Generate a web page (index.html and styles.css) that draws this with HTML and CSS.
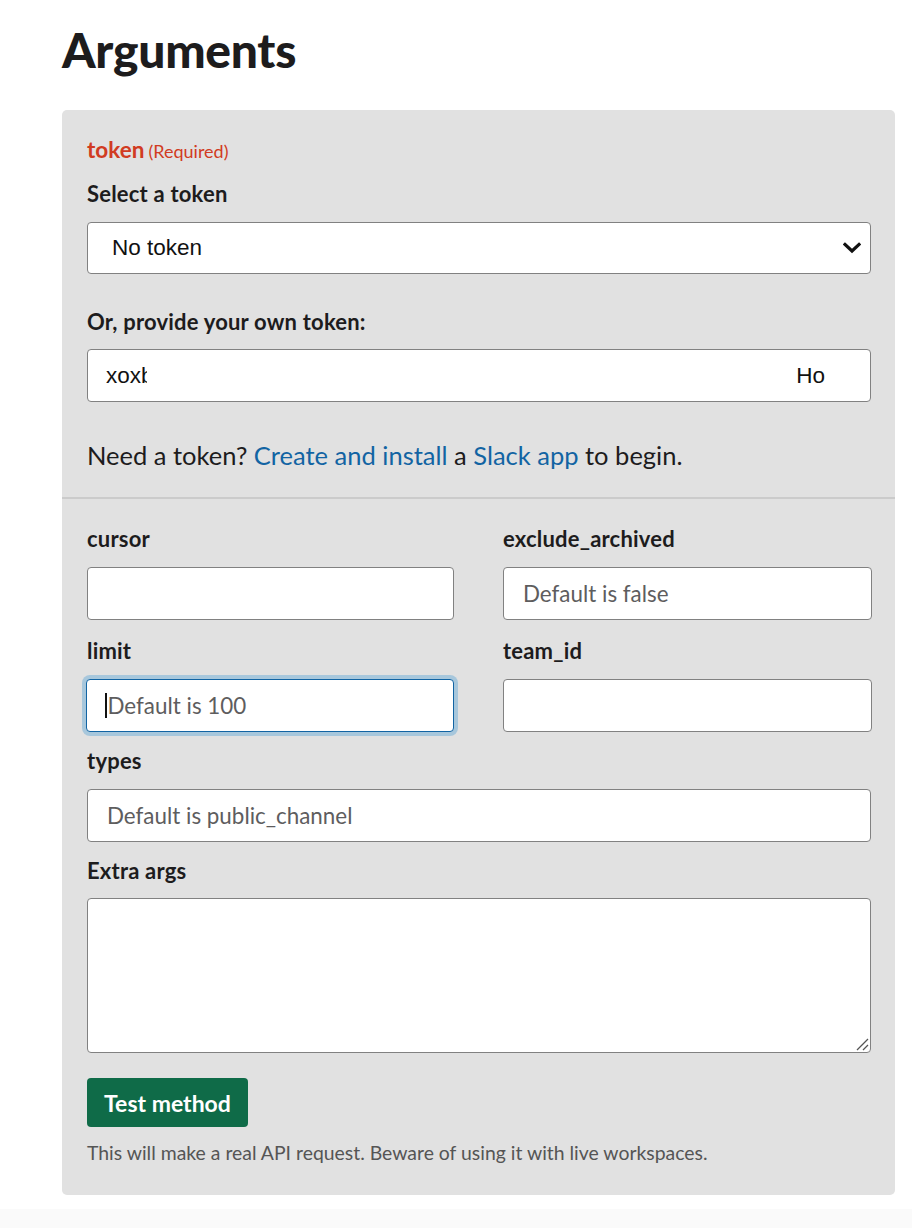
FILE: index.html
```html
<!DOCTYPE html>
<html>
<head>
<meta charset="utf-8">
<link rel="stylesheet" href="styles.css">
</head>
<body>
<main class="page">
  <h1 class="title">Arguments</h1>
  <section class="panel">
    <div class="token-section">
      <div class="req-label"><span class="req-name">token</span> <span class="req-note">(Required)</span></div>
      <label class="label">Select a token</label>
      <div class="select">
        <span class="select-text">No token</span>
        <svg class="chevron" width="18" height="12" viewBox="0 0 18 12"><path d="M2 2.5 L9 9 L16 2.5" fill="none" stroke="#111" stroke-width="3.2" stroke-linecap="square"/></svg>
      </div>
      <label class="label label-gap">Or, provide your own token:</label>
      <div class="input token-input"><span class="tok-a">xoxb</span><span class="tok-b">Ho</span></div>
      <p class="help">Need a token? <a class="link">Create and install</a> a <a class="link">Slack app</a> to begin.</p>
    </div>
    <div class="args">
      <div class="grid">
        <div class="field">
          <label class="label">cursor</label>
          <div class="input"></div>
        </div>
        <div class="field">
          <label class="label">exclude_archived</label>
          <div class="input"><span class="ph">Default is false</span></div>
        </div>
        <div class="field">
          <label class="label">limit</label>
          <div class="input focused"><span class="caret"></span><span class="ph">Default is 100</span></div>
        </div>
        <div class="field">
          <label class="label">team_id</label>
          <div class="input"></div>
        </div>
      </div>
      <div class="field">
        <label class="label">types</label>
        <div class="input"><span class="ph">Default is public_channel</span></div>
      </div>
      <div class="field field-extra">
        <label class="label">Extra args</label>
        <div class="textarea">
          <svg class="grip" width="14" height="14" viewBox="0 0 14 14"><path d="M2 13 L13 2 M8 13 L13 8" stroke="#555" stroke-width="1.3" fill="none"/></svg>
        </div>
      </div>
      <button class="btn">Test method</button>
      <p class="note">This will make a real API request. Beware of using it with live workspaces.</p>
    </div>
  </section>
</main>
<div class="footer-strip"></div>
</body>
</html>
```

FILE: styles.css
```css
* { box-sizing: border-box; }
html, body { margin: 0; padding: 0; background: #fff; }
body { font-family: Lato, "Noto Sans", sans-serif; color: #1d1c1d; }
.page { padding: 0 17px 0 62px; }
.title {
  margin: 0;
  padding-top: 22px;
  height: 110px;
  font-family: Lato, sans-serif;
  font-weight: 900;
  font-size: 48px;
  line-height: 56px;
  letter-spacing: -0.3px;
  color: #1d1c1d;
}
.panel {
  background: #e1e1e1;
  border-radius: 5px;
  width: 833px;
  height: 1085px;
}
.token-section { padding: 26px 24px 0 25px; border-bottom: 2px solid #cbcbcb; height: 389px; }
.req-label { line-height: 28px; }
.req-name { color: #d13b22; font-weight: 700; font-size: 22.5px; }
.req-note { color: #d13b22; font-size: 18px; }
.label { display: block; font-weight: 700; font-size: 22px; line-height: 28px; margin-top: 14px; color: #1d1c1d; letter-spacing: 0.2px; }
.label-gap { margin-top: 34px; }
.select, .input {
  display: flex;
  align-items: center;
  background: #fff;
  border: 1.5px solid #818181;
  border-radius: 4px;
  height: 53px;
  margin-top: 14px;
}
.select { padding: 0 9px 0 24px; justify-content: space-between; height: 52px; }
.select-text, .token-input { font-family: "Liberation Sans", Arial, sans-serif; font-size: 22.5px; color: #111; }
.token-input { padding: 0 45px 0 18px; justify-content: space-between; margin-top: 13px; }
.tok-a { width: 41px; overflow: hidden; white-space: nowrap; }
.help { margin: 38px 0 0; font-size: 25.5px; line-height: 30px; color: #1d1c1d; }
.link { color: #1264a3; text-decoration: none; }
.args { padding: 26px 24px 0 25px; }
.grid { display: grid; grid-template-columns: 367px 369px; column-gap: 49px; row-gap: 0; }
.field .label { margin-top: 0; }
.field { margin-bottom: 17px; }
.field .input { margin-top: 14px; }
.grid .field:nth-child(3), .grid .field:nth-child(4) { margin-bottom: 15px; }
.field-extra { margin-bottom: 0; }
.field:nth-child(2):not(.grid .field) { margin-bottom: 15px; }
.ph { font-size: 22.4px; color: #5e5d5e; padding-left: 19px; }
.focused {
  border-color: #1264a3;
  box-shadow: 0 0 0 4px #a7c7dc;
  margin-left: -1px;
}
.focused .ph { padding-left: 1px; }
.caret { display: inline-block; width: 1.5px; height: 25px; background: #111; margin-left: 18px; }
.textarea {
  position: relative;
  background: #fff;
  border: 1.5px solid #818181;
  border-radius: 4px;
  height: 155px;
  margin-top: 13px;
}
.grip { position: absolute; right: 1px; bottom: 1px; }
.btn {
  display: block;
  margin-top: 25px;
  background: #0f6b48;
  color: #fff;
  border: none;
  border-radius: 4px;
  font-family: Lato, sans-serif;
  font-weight: 700;
  font-size: 23px;
  width: 161px;
  height: 49px;
  padding: 0;
}
.note { margin: 15px 0 0; font-size: 19.4px; color: #555; line-height: 22px; }
.footer-strip { margin-top: 14px; height: 30px; background: #fafafa; }
```
